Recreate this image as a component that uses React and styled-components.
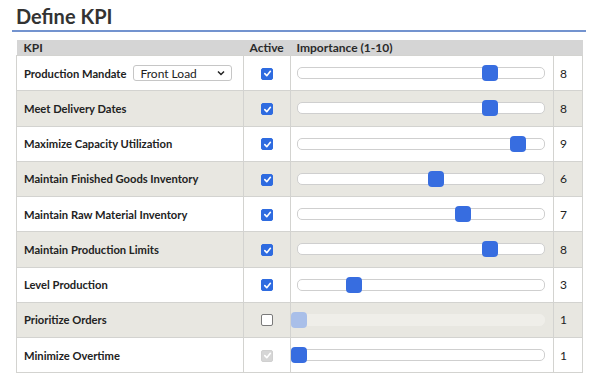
import React from "react";
import styled, { createGlobalStyle } from "styled-components";

const GlobalStyle = createGlobalStyle`
  body {
    margin: 0;
    background: #ffffff;
    font-family: Lato, "Liberation Sans", sans-serif;
    color: #222;
  }
`;

const kpis = [
  { name: "Production Mandate", active: true, value: 8, mandate: "Front Load" },
  { name: "Meet Delivery Dates", active: true, value: 8 },
  { name: "Maximize Capacity Utilization", active: true, value: 9 },
  { name: "Maintain Finished Goods Inventory", active: true, value: 6 },
  { name: "Maintain Raw Material Inventory", active: true, value: 7 },
  { name: "Maintain Production Limits", active: true, value: 8 },
  { name: "Level Production", active: true, value: 3 },
  { name: "Prioritize Orders", active: false, value: 1 },
  { name: "Minimize Overtime", active: true, value: 1, locked: true },
];

const Page = styled.div`
  padding: 0 14px 0 12px;
`;

const Title = styled.h1`
  margin: 0;
  padding: 5px 0 3px 4px;
  font-size: 20px;
  font-weight: 700;
  line-height: 22px;
  color: #333;
  border-bottom: 2px solid #7393cf;
`;

const Table = styled.table`
  margin: 8px 0 0 4px;
  width: 566px;
  border-collapse: collapse;
  table-layout: fixed;
  font-size: 12px;
`;

const HeadCell = styled.th`
  height: 15px;
  padding: 0 0 0 ${(p) => p.$pad || 7}px;
  background: #d5d5d5;
  text-align: left;
  font-weight: 700;
  font-size: 12px;
  color: #2a2a2a;
  line-height: 15px;
`;

const Row = styled.tr`
  height: 35.25px;
  background: ${(p) => (p.$striped ? "#e8e7e1" : "#ffffff")};
`;

const Cell = styled.td`
  padding: 0;
  border: 1px solid #d3d3d0;
  vertical-align: middle;
`;

const NameCell = styled(Cell)`
  padding-left: 7px;
  font-weight: 700;
  font-size: 11.2px;
  color: #222;
`;

const NameWrap = styled.div`
  display: flex;
  align-items: center;
  gap: 7px;
`;

const Select = styled.div`
  display: flex;
  align-items: center;
  justify-content: space-between;
  box-sizing: border-box;
  width: 99px;
  height: 16px;
  padding: 0 6px 0 6px;
  border: 1px solid #c6c6c6;
  border-radius: 3px;
  background: #fff;
  font-weight: 400;
  font-size: 12px;
  color: #222;
`;

const CheckCell = styled(Cell)`
  text-align: center;
`;

const Box = styled.span`
  display: inline-flex;
  align-items: center;
  justify-content: center;
  box-sizing: border-box;
  width: 12px;
  height: 12px;
  border-radius: 2px;
  margin-top: 3px;
  background: ${(p) => (p.$state === "on" ? "#2e6be0" : p.$state === "locked" ? "#d6d6d6" : "#fff")};
  border: 1px solid ${(p) => (p.$state === "on" ? "#2e6be0" : p.$state === "locked" ? "#d0d0d0" : "#7a7a7a")};
`;

const SliderCell = styled(Cell)`
  padding: 0;
`;

const Slider = styled.div`
  position: relative;
  height: 16px;
`;

const Track = styled.div`
  position: absolute;
  left: 6px;
  right: 8px;
  top: 2px;
  height: 12px;
  box-sizing: border-box;
  border-radius: 5px;
  background: ${(p) => (p.$disabled ? "#efeee9" : "#ffffff")};
  border: 1px solid ${(p) => (p.$disabled ? "#efeee9" : "#cfcfcf")};
`;

const Thumb = styled.div`
  position: absolute;
  top: 0;
  width: 16px;
  height: 16px;
  border-radius: 4px;
  background: ${(p) => (p.$disabled ? "#a9bfe9" : "#376de0")};
`;

const ValueCell = styled(Cell)`
  padding-left: 6px;
  font-size: 12px;
  color: #222;
`;

const Check = ({ state }) => (
  <Box $state={state}>
    {state !== "off" && (
      <svg width="9" height="9" viewBox="0 0 10 10">
        <path d="M2 5.2 L4.2 7.4 L8.2 2.6" fill="none" stroke="#fff" strokeWidth="1.8" strokeLinecap="round" strokeLinejoin="round" />
      </svg>
    )}
  </Box>
);

const Chevron = () => (
  <svg width="8" height="6" viewBox="0 0 8 6">
    <path d="M1 1.5 L4 4.5 L7 1.5" fill="none" stroke="#222" strokeWidth="1.5" />
  </svg>
);

const App = () => {
  const span = 246;
  return (
    <Page>
      <GlobalStyle />
      <Title>Define KPI</Title>
      <Table>
        <colgroup>
          <col style={{ width: 227 }} />
          <col style={{ width: 47 }} />
          <col style={{ width: 263 }} />
          <col style={{ width: 29 }} />
        </colgroup>
        <thead>
          <tr>
            <HeadCell>KPI</HeadCell>
            <HeadCell $pad={6}>Active</HeadCell>
            <HeadCell $pad={6}>Importance (1-10)</HeadCell>
            <HeadCell />
          </tr>
        </thead>
        <tbody>
          {kpis.map((k, i) => {
            const disabled = !k.active;
            const state = k.locked ? "locked" : k.active ? "on" : "off";
            return (
              <Row key={k.name} $striped={i % 2 === 1}>
                <NameCell>
                  <NameWrap>
                    {k.name}
                    {k.mandate && (
                      <Select>
                        {k.mandate}
                        <Chevron />
                      </Select>
                    )}
                  </NameWrap>
                </NameCell>
                <CheckCell>
                  <Check state={state} />
                </CheckCell>
                <SliderCell>
                  <Slider>
                    <Track $disabled={disabled} />
                    <Thumb
                      $disabled={disabled}
                      style={{ left: ((k.value - 1) / 9) * span }}
                    />
                  </Slider>
                </SliderCell>
                <ValueCell>{k.value}</ValueCell>
              </Row>
            );
          })}
        </tbody>
      </Table>
    </Page>
  );
};

export default App;
